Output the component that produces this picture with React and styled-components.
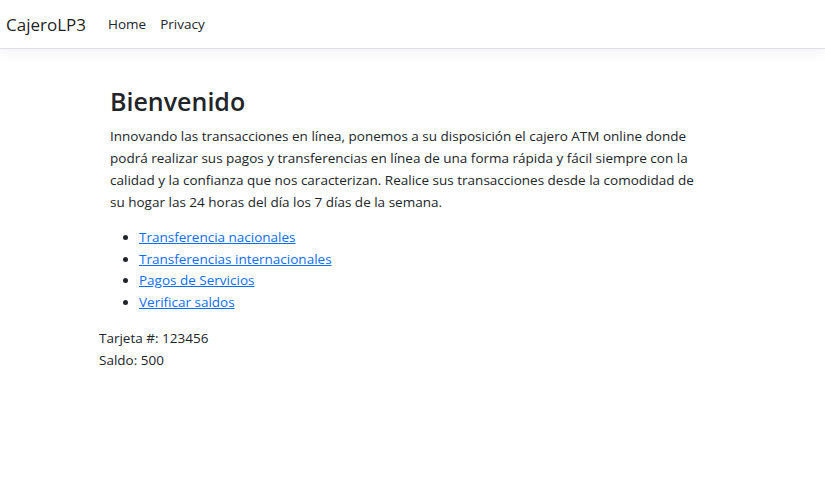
import React from 'react';
import styled, {createGlobalStyle} from "styled-components";

const GlobalStyle = createGlobalStyle`
  html, body {
    margin: 0;
    padding: 0;
    background: #fff;
  }

  body {
    font-family: 'Open Sans', 'Noto Sans', sans-serif;
    font-size: 13.5px;
    color: #212529;
  }
`;

const Header = styled.header`
  height: 48px;
  border-bottom: 1px solid #dee2e6;
  box-shadow: 0 4px 12px rgba(0, 0, 0, .05);
  display: flex;
  align-items: center;
  padding: 0 6px;
  margin-bottom: 37px;
`;

const Brand = styled.a`
  font-size: 17px;
  color: rgba(0, 0, 0, .9);
  text-decoration: none;
  margin-right: 15px;
`;

const NavList = styled.ul`
  display: flex;
  list-style: none;
  margin: 0;
  padding: 0;
`;

const NavLink = styled.a`
  display: block;
  padding: 8px 7px;
  font-size: 13.5px;
  color: #212529;
  text-decoration: none;
`;

const Container = styled.main`
  padding-left: 99px;
`;

const Welcome = styled.div`
  padding-left: 11px;
  width: 602px;

  .welcome {
    &__title {
      margin: 0 0 9px;
      font-size: 25px;
      font-weight: 600;
      line-height: 1.2;
    }

    &__text {
      margin: 0 0 14px;
      line-height: 22px;
    }
  }
`;

const Links = styled.ul`
  margin: 0 0 13px;
  padding-left: 29px;
  line-height: 21.7px;

  a {
    color: #0d6efd;
    text-decoration: underline;
  }
`;

const Info = styled.p`
  margin: 0;
  line-height: 22px;
`;

const links = [
    'Transferencia nacionales',
    'Transferencias internacionales',
    'Pagos de Servicios',
    'Verificar saldos',
];

const App = () => {
    return (
        <>
            <GlobalStyle/>
            <Header>
                <Brand href="#">CajeroLP3</Brand>
                <NavList>
                    <li><NavLink href="#">Home</NavLink></li>
                    <li><NavLink href="#">Privacy</NavLink></li>
                </NavList>
            </Header>
            <Container>
                <Welcome>
                    <h1 className="welcome__title">Bienvenido</h1>
                    <p className="welcome__text">
                        Innovando las transacciones en línea, ponemos a su disposición el cajero ATM online donde
                        podrá realizar sus pagos y transferencias en línea de una forma rápida y fácil siempre con la
                        calidad y la confianza que nos caracterizan. Realice sus transacciones desde la comodidad de
                        su hogar las 24 horas del día los 7 días de la semana.
                    </p>
                    <Links>
                        {links.map((text, id) => <li key={id}><a href="#">{text}</a></li>)}
                    </Links>
                </Welcome>
                <Info>Tarjeta #: 123456</Info>
                <Info>Saldo: 500</Info>
            </Container>
        </>
    );
};

export default App;
